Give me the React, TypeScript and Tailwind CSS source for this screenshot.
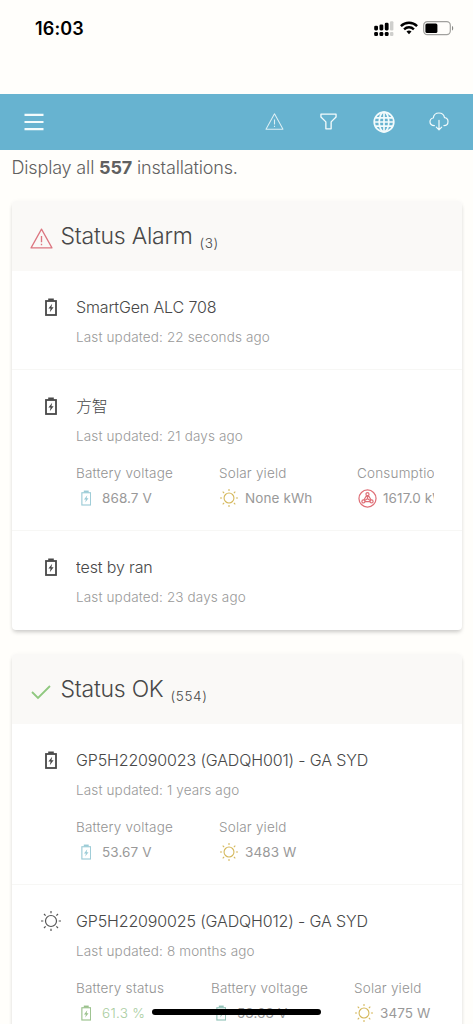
import React from "react";

type Tone = "dark" | "blue" | "green" | "teal";

function BatteryIcon({ className, bold = false }: { className: string; bold?: boolean }) {
  return (
    <svg viewBox="0 0 12 18" className={className} fill="none" stroke="currentColor">
      <rect x="1" y="3" width="10" height="14" strokeWidth={bold ? 1.8 : 1.3} />
      <path d="M3.2 0.5h5.6v2.2H3.2z" fill="currentColor" stroke="none" />
      <path d="M7.2 5.8L3.4 10.6h2.2L4.8 14.2L8.6 9.3H6.4z" fill="currentColor" stroke="none" />
    </svg>
  );
}

function SunIcon({ className }: { className: string }) {
  return (
    <svg viewBox="0 0 20 20" className={className} fill="none" stroke="currentColor" strokeWidth="1.2">
      <circle cx="10" cy="10" r="5.5" />
      <path d="M10 0v2.3M10 17.7V20M0 10h2.3M17.7 10H20M3 3l1.6 1.6M15.4 15.4L17 17M3 17l1.6-1.6M15.4 4.6L17 3" />
    </svg>
  );
}

function ConsumptionIcon() {
  return (
    <svg viewBox="0 0 20 20" className="h-[19px] w-[19px] text-[#df7078]" fill="none" stroke="currentColor" strokeWidth="1.3">
      <circle cx="10" cy="10" r="9" />
      <circle cx="10" cy="5.4" r="1.6" />
      <circle cx="5.7" cy="13.1" r="1.6" />
      <circle cx="14.3" cy="13.1" r="1.6" />
      <path d="M9 6.8L6.2 11.6M11 6.8l2.8 4.8M7.3 13.4h5.4M10 7v3.2M10 10.2L7 12.2M10 10.2l3 2" />
    </svg>
  );
}

function WarningIcon({ className }: { className: string }) {
  return (
    <svg viewBox="0 0 22 20" className={className} fill="none" stroke="currentColor" strokeWidth="1.2" strokeLinejoin="round">
      <path d="M11 1L21 19H1z" />
      <path d="M11 7.5v6M11 15v1.4" strokeWidth="1.3" />
    </svg>
  );
}

function StatusBar() {
  return (
    <div className="flex h-[94px] items-start justify-between pl-[35px] pr-[19px] pt-[18px]">
      <div className="text-[18px] font-semibold leading-[22px] tracking-[0.15px] text-black">16:03</div>
      <div className="flex pt-[2px]">
        <svg viewBox="0 0 20 17" className="h-[17px] w-[20px]">
          <g fill="#000">
            <rect x="0.2" y="5.8" width="3.8" height="4.6" rx="1.3" />
            <rect x="5.5" y="4.5" width="3.8" height="5.9" rx="1.3" />
            <rect x="10.8" y="2.8" width="3.8" height="7.6" rx="1.3" />
            <rect x="0.2" y="12" width="3.8" height="4" rx="1.3" />
            <rect x="5.5" y="12" width="3.8" height="4" rx="1.3" />
            <rect x="10.8" y="12" width="3.8" height="4" rx="1.3" />
          </g>
          <g fill="#cfcfcc">
            <rect x="16" y="1.2" width="3.4" height="9.2" rx="1" />
            <rect x="16" y="12" width="3.4" height="4" rx="1" />
          </g>
        </svg>
        <svg viewBox="0 0 18 14" className="ml-[6px] mt-[1px] h-[14px] w-[18px]" fill="none" stroke="#000" strokeWidth="2.4">
          <path d="M0.9 5.1C5.4 0.7 12.6 0.7 17.1 5.1" />
          <path d="M4.1 8.3C6.9 5.6 11.1 5.6 13.9 8.3" />
          <path d="M6.5 10.6C8 9.2 10 9.2 11.5 10.6L9 13.2z" fill="#000" stroke="none" />
        </svg>
        <svg viewBox="0 0 31 15" className="ml-[5px] mt-[1px] h-[15px] w-[31px]">
          <rect x="0.7" y="0.7" width="26.6" height="13" rx="3.6" fill="none" stroke="#a1a19e" strokeWidth="1.2" />
          <rect x="2.4" y="2.4" width="12" height="9.6" rx="1.6" fill="#000" />
          <path d="M29 5v4.5c1.6-.6 1.6-3.9 0-4.5z" fill="#888885" />
        </svg>
      </div>
    </div>
  );
}

function Toolbar() {
  return (
    <div className="flex h-[56px] items-center bg-[#67b3d0] pb-[1px] pl-[24px] pr-[24px] text-[#f3fbfc]">
      <svg viewBox="0 0 20 18" className="h-[18px] w-[20px]" stroke="currentColor" strokeWidth="2.2">
        <path d="M0.5 1.8h19M0.5 9h19M0.5 16.2h19" />
      </svg>
      <div className="ml-auto flex items-center">
        <WarningIcon className="mr-[36px] h-[17px] w-[19px] opacity-85" />
        <svg viewBox="0 0 18 18" className="mr-[36px] h-[17px] w-[17px]" fill="none" stroke="currentColor" strokeWidth="1.4" strokeLinejoin="round">
          <path d="M1 1.2h16v3l-5.2 5.2v7.4H6.2V9.4L1 4.2z" />
        </svg>
        <svg viewBox="0 0 22 22" className="mr-[34px] h-[22px] w-[22px]" fill="none" stroke="currentColor" strokeWidth="1.7">
          <circle cx="11" cy="11" r="9.8" />
          <ellipse cx="11" cy="11" rx="4.8" ry="9.8" />
          <path d="M11 1.2v19.6M1.2 11h19.6M2.5 6.8h17M2.5 15.2h17" />
        </svg>
        <svg viewBox="0 0 20 19" className="h-[19px] w-[20px]" fill="none" stroke="currentColor" strokeWidth="1.2" strokeLinecap="round" strokeLinejoin="round">
          <path d="M5.4 13.6C2.6 13.6 1 12 1 9.8c0-2 1.3-3.5 3.3-3.8C4.7 3 6.9 1 9.9 1c2.8 0 5 1.8 5.6 4.6C17.7 5.9 19 7.5 19 9.5c0 2.4-1.6 4.1-4.1 4.1" />
          <path d="M10 8.3v9.4M7.3 15.2l2.7 2.7 2.7-2.7" />
        </svg>
      </div>
    </div>
  );
}

interface Metric {
  label: string;
  value: string;
  width: string;
  icon: Tone | "sun" | "consumption";
}

const batteryTones: Record<Tone, string> = {
  dark: "h-[18px] w-[12px] text-[#484848]",
  blue: "h-[16px] w-[10.5px] text-[#9bcbd6]",
  green: "h-[16px] w-[10.5px] text-[#9ac18c]",
  teal: "h-[16px] w-[10.5px] text-[#93c3b9]",
};

function MetricIcon({ icon }: { icon: Metric["icon"] }) {
  if (icon === "sun") return <SunIcon className="h-[18px] w-[18px] text-[#d5b85c]" />;
  if (icon === "consumption") return <ConsumptionIcon />;
  return <BatteryIcon className={batteryTones[icon]} />;
}

interface RowProps {
  title: string;
  updated: string;
  solar?: boolean;
  metrics?: Metric[];
}

function InstallationRow({ title, updated, solar, metrics }: RowProps) {
  return (
    <div className="flex border-b border-[#f7f7f5] pb-[22px] pr-[28px] pt-[24px] last:border-transparent">
      <div className="flex h-[23px] w-[64px] shrink-0 items-center justify-center pl-[14px]">
        {solar ? <SunIcon className="h-[20px] w-[20px] shrink-0 text-[#555]" /> : <BatteryIcon bold className={batteryTones.dark} />}
      </div>
      <div className="min-w-0 flex-1 overflow-hidden whitespace-nowrap">
        <div className="text-[16px] leading-[24px] tracking-[-0.14px] text-[#484848]">{title}</div>
        <div className="mt-[8px] text-[13.5px] leading-[20px] tracking-[0.14px] text-[#999]">
          Last updated: {updated}
        </div>
        {metrics && (
          <div className="mt-[17px] flex">
            {metrics.map((m) => (
              <div key={m.label} className={"shrink-0 " + m.width}>
                <div className="text-[13.5px] leading-[20px] tracking-[0.19px] text-[#939393]">{m.label}</div>
                <div className="mt-[5px] flex h-[20px] items-center">
                  <div className="flex w-[20px] justify-center">
                    <MetricIcon icon={m.icon} />
                  </div>
                  <div className={m.icon === "green" ? "ml-[6px] text-[13.5px] leading-[20px] tracking-[0.3px] text-[#a9cda0]" : "ml-[6px] text-[13.5px] font-normal leading-[20px] tracking-[0.1px] text-[#999]"}>
                    {m.value}
                  </div>
                </div>
              </div>
            ))}
          </div>
        )}
      </div>
    </div>
  );
}

function StatusCard({ title, count, icon, rows }: { title: string; count: number; icon: React.ReactNode; rows: RowProps[] }) {
  return (
    <section className="rounded-[4px] bg-white shadow-[0_3px_4px_-1px_rgba(0,0,0,0.2),0_0_4px_rgba(0,0,0,0.03)]">
      <header className="flex h-[70px] rounded-t-[4px] bg-[#faf9f7] pl-[18px] pt-[17px] text-[#484848]">
        <div className="mt-[10px] h-[22px] w-[22px]">{icon}</div>
        <h2 className="ml-[8.5px] text-[23px] leading-[36px] tracking-[-0.25px]">{title}</h2>
        <span className="ml-[7px] mt-[15px] text-[13.5px] leading-[20px] tracking-[0.6px]">({count})</span>
      </header>
      {rows.map((row) => (
        <InstallationRow key={row.title} {...row} />
      ))}
    </section>
  );
}

const alarmRows: RowProps[] = [
  { title: "SmartGen ALC 708", updated: "22 seconds ago" },
  {
    title: "方智",
    updated: "21 days ago",
    metrics: [
      { label: "Battery voltage", value: "868.7 V", width: "w-[143px]", icon: "blue" },
      { label: "Solar yield", value: "None kWh", width: "w-[138px]", icon: "sun" },
      { label: "Consumption", value: "1617.0 kWh", width: "w-[138px]", icon: "consumption" },
    ],
  },
  { title: "test by ran", updated: "23 days ago" },
];

const okRows: RowProps[] = [
  {
    title: "GP5H22090023 (GADQH001) - GA SYD",
    updated: "1 years ago",
    metrics: [
      { label: "Battery voltage", value: "53.67 V", width: "w-[143px]", icon: "blue" },
      { label: "Solar yield", value: "3483 W", width: "w-[138px]", icon: "sun" },
    ],
  },
  {
    title: "GP5H22090025 (GADQH012) - GA SYD",
    updated: "8 months ago",
    solar: true,
    metrics: [
      { label: "Battery status", value: "61.3 %", width: "w-[135px]", icon: "green" },
      { label: "Battery voltage", value: "53.63 V", width: "w-[143px]", icon: "teal" },
      { label: "Solar yield", value: "3475 W", width: "w-[100px]", icon: "sun" },
    ],
  },
];

export default function App() {
  return (
    <div className="relative h-[1024px] w-[473px] overflow-hidden bg-[#fffefb] font-['Inter','Noto_Sans_CJK_SC',sans-serif] font-light">
      <StatusBar />
      <Toolbar />
      <p className="h-[51px] pl-[11.5px] pt-[6px] text-[18px] leading-[24px] tracking-[-0.16px] text-[#606060]">
        Display all <b className="font-bold">557</b> installations.
      </p>
      <main className="flex flex-col gap-[24px] pl-[12px] pr-[11px]">
        <StatusCard
          title="Status Alarm"
          count={3}
          rows={alarmRows}
          icon={<WarningIcon className="h-[21px] w-[23px] text-[#dc7680]" />}
        />
        <StatusCard
          title="Status OK"
          count={554}
          rows={okRows}
          icon={
            <svg viewBox="0 0 22 22" className="h-[22px] w-[22px]" fill="none" stroke="#8fc87f" strokeWidth="1.8">
              <path d="M2 11l6 6L20 5" />
            </svg>
          }
        />
      </main>
      <div className="absolute left-[152px] top-[1009px] h-[6px] w-[169px] rounded-full bg-black" />
    </div>
  );
}
